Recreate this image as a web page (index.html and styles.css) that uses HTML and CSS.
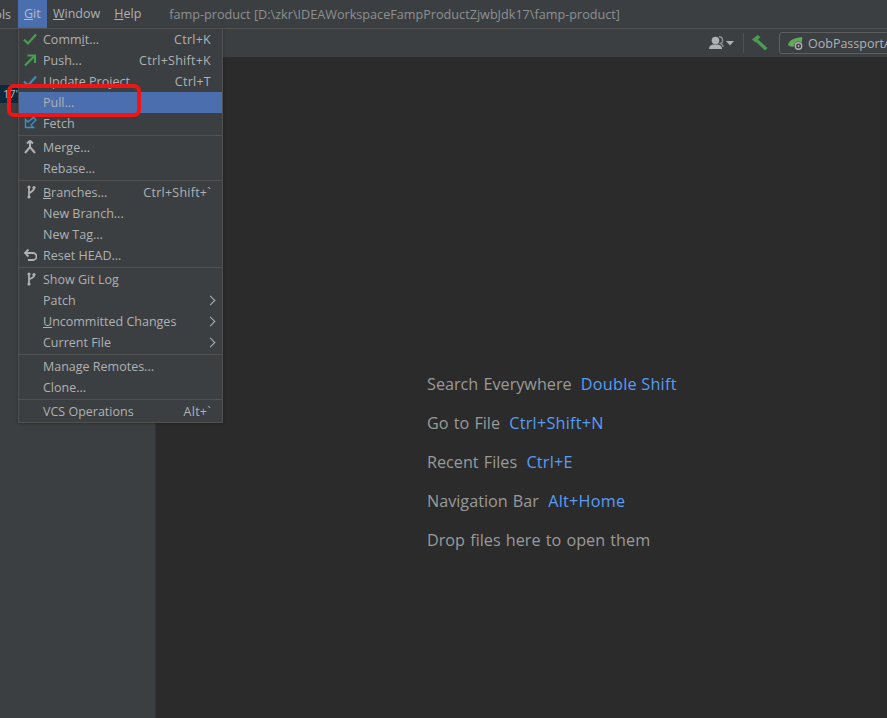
FILE: index.html
```html
<!DOCTYPE html>
<html lang="en">
<head>
    <meta charset="UTF-8">
    <title>famp-product</title>
    <link rel="stylesheet" href="styles.css">
</head>
<body>
    <header class="titlebar">
        <div class="menu-clip"><span>Tools</span></div>
        <a class="menu-item active"><u>G</u>it</a>
        <a class="menu-item"><u>W</u>indow</a>
        <a class="menu-item"><u>H</u>elp</a>
        <span class="title">famp-product [D:\zkr\IDEAWorkspaceFampProductZjwbJdk17\famp-product]</span>
    </header>

    <div class="toolbar">
        <svg class="ico-user" width="26" height="14" viewBox="0 0 26 14">
            <circle cx="6.500" cy="4.500" r="3.800" fill="#afb1b3"/>
            <path d="M0 13c0-3 2-4 4-4.500h5c2 .5 4 1.500 4 4.500z" fill="#afb1b3"/>
            <path d="M10 .8a3.500 3.500 0 0 1 1.500 6.700c1.500.5 2.500 1.500 2.500 3.500" fill="none" stroke="#8a8c8e" stroke-width="1.400"/>
            <path d="M17 5h8l-4 4.500z" fill="#afb1b3"/>
        </svg>
        <div class="tool-sep"></div>
        <svg class="ico-hammer" width="16" height="16" viewBox="0 0 16 16">
            <path d="M0 4.500 5.500 0 8.500 2 3.500 7.500z" fill="#499c54"/>
            <path d="M5 3.500 15.500 13l-2.500 2.500L3 6z" fill="#499c54"/>
        </svg>
        <div class="run-config">
            <svg width="16" height="16" viewBox="0 0 16 16">
                <path d="M0 10C1 5 6 3 14 2c1 5-1 8-5 9-4 1-7 1-9-1z" fill="#62a857"/>
                <circle cx="10.500" cy="11" r="4.500" fill="#3c3f41"/>
                <circle cx="10.500" cy="11" r="3.200" fill="none" stroke="#afb1b3" stroke-width="1.400"/>
                <circle cx="10.500" cy="11" r="1" fill="#afb1b3"/>
            </svg>
            <span>OobPassportApplication</span>
        </div>
    </div>

    <div class="workspace">
        <aside class="sidebar">
            <div class="tree-row"><span>Jdk 17'</span></div>
        </aside>
        <main class="editor">
            <div class="hints">
                <p>Search Everywhere <b>Double Shift</b></p>
                <p>Go to File <b>Ctrl+Shift+N</b></p>
                <p>Recent Files <b>Ctrl+E</b></p>
                <p>Navigation Bar <b>Alt+Home</b></p>
                <p>Drop files here to open them</p>
            </div>
        </main>
    </div>

    <nav class="git-menu">
        <div class="row">
            <svg class="icon" width="14" height="14" viewBox="0 0 14 14"><path d="M1 7.500 5 11.500 13 2.500" fill="none" stroke="#499c54" stroke-width="2.200"/></svg>
            <span class="label">Comm<u>i</u>t...</span><span class="keys">Ctrl+K</span>
        </div>
        <div class="row">
            <svg class="icon" width="14" height="14" viewBox="0 0 14 14"><path d="M2 12.500 11.500 3M4.500 2.500h7.500v7.500" fill="none" stroke="#499c54" stroke-width="2.200"/></svg>
            <span class="label">Push...</span><span class="keys">Ctrl+Shift+K</span>
        </div>
        <div class="row">
            <svg class="icon" width="14" height="14" viewBox="0 0 14 14"><path d="M1 7.500 5 11.500 13 2.500" fill="none" stroke="#3592c4" stroke-width="2.200"/></svg>
            <span class="label">Update Project</span><span class="keys">Ctrl+T</span>
        </div>
        <div class="row selected">
            <span class="label">Pull...</span>
        </div>
        <div class="row">
            <svg class="icon" width="14" height="14" viewBox="0 0 14 14"><path d="M10.500 1.500 13 4 8 9l2.500 2.500H2.500v-8L5 6z" fill="none" stroke="#3592c4" stroke-width="1.400"/></svg>
            <span class="label">Fetch</span>
        </div>
        <div class="sep"></div>
        <div class="row">
            <svg class="icon" width="14" height="14" viewBox="0 0 14 14"><path d="M7 1v6M7 7 2 13M7 7l5 6M4 3.500 7 .8l3 2.700" fill="none" stroke="#afb1b3" stroke-width="2"/></svg>
            <span class="label">Merge...</span>
        </div>
        <div class="row"><span class="label">Rebase...</span></div>
        <div class="sep"></div>
        <div class="row">
            <svg class="icon icon-branch" width="14" height="14" viewBox="0 0 14 14"><path d="M5 2v10M5 9c0-2 5-2 5-6" fill="none" stroke="#afb1b3" stroke-width="1.800"/><circle cx="5" cy="2" r="1.600" fill="#afb1b3"/><circle cx="5" cy="12" r="1.600" fill="#afb1b3"/><circle cx="10" cy="2.500" r="1.600" fill="#afb1b3"/></svg>
            <span class="label"><u>B</u>ranches...</span><span class="keys">Ctrl+Shift+`</span>
        </div>
        <div class="row"><span class="label">New Branch...</span></div>
        <div class="row"><span class="label">New Tag...</span></div>
        <div class="row">
            <svg class="icon" width="14" height="14" viewBox="0 0 14 14"><path d="M2.500 5H10a3 3 0 0 1 0 7H5M5.500 1.500 2 5l3.500 3.500" fill="none" stroke="#afb1b3" stroke-width="1.800"/></svg>
            <span class="label">Reset HEAD...</span>
        </div>
        <div class="sep"></div>
        <div class="row">
            <svg class="icon icon-branch" width="14" height="14" viewBox="0 0 14 14"><path d="M5 2v10M5 8c0-2 5-1 5-5" fill="none" stroke="#afb1b3" stroke-width="1.800"/><circle cx="5" cy="2" r="1.600" fill="#afb1b3"/><circle cx="5" cy="12" r="1.600" fill="#afb1b3"/><circle cx="10" cy="2.500" r="1.600" fill="#afb1b3"/></svg>
            <span class="label">Show Git Log</span>
        </div>
        <div class="row"><span class="label">Patch</span><span class="arrow"></span></div>
        <div class="row"><span class="label"><u>U</u>ncommitted Changes</span><span class="arrow"></span></div>
        <div class="row"><span class="label">Current File</span><span class="arrow"></span></div>
        <div class="sep"></div>
        <div class="row"><span class="label">Manage Remotes...</span></div>
        <div class="row"><span class="label">Clone...</span></div>
        <div class="sep"></div>
        <div class="row"><span class="label">VCS Operations</span><span class="keys">Alt+`</span></div>
    </nav>

    <div class="red-box"></div>
</body>
</html>
```

FILE: styles.css
```css
html, body { margin: 0; padding: 0; height: 100%; overflow: hidden; }
body {
    position: relative;
    display: flex;
    flex-direction: column;
    background-color: #3c3f41;
    color: #afb1b3;
    font-family: "Open Sans", "Noto Sans", Arial, sans-serif;
    font-size: 12.5px;
}

/* title row */
.titlebar {
    display: flex;
    align-items: center;
    height: 28px;
    border-bottom: 1px solid #515151;
    white-space: nowrap;
    flex: none;
}
.menu-clip { width: 18px; overflow: hidden; display: flex; justify-content: flex-end; padding-right: 7px; box-sizing: border-box; }
.menu-item { height: 28px; line-height: 28px; padding: 0 6px; }
.menu-item.active { background-color: #4b6eaf; color: #bbbbbb; width: 29px; box-sizing: border-box; }
.menu-item:nth-child(3) { margin-right: 2px; }
.title { margin-left: 22px; color: #8d8f91; font-size: 12.65px; }

/* toolbar */
.toolbar {
    display: flex;
    align-items: center;
    justify-content: flex-end;
    height: 28px;
    flex: none;
    overflow: hidden;
    padding-left: 600px;
}
.ico-user { flex: none; margin-right: 8px; }
.tool-sep { width: 1px; height: 20px; background-color: #515151; flex: none; margin-right: 8px; }
.ico-hammer { flex: none; margin-right: 11px; }
.run-config {
    display: flex;
    align-items: center;
    gap: 4px;
    flex: none;
    width: 200px;
    height: 20px;
    margin-right: -102px;
    padding-left: 8px;
    border: 1px solid #5e6060;
    border-radius: 3px;
    white-space: nowrap;
    font-size: 12.5px;
}

/* main area */
.workspace { display: flex; flex: 1; min-height: 0; }
.sidebar { width: 155px; flex: none; border-right: 1px solid #323232; background-color: #3c3f41; }
.tree-row {
    display: flex;
    justify-content: flex-end;
    margin-top: 28px;
    height: 18px;
    line-height: 18px;
    width: 18px;
    overflow: hidden;
    white-space: nowrap;
    font-size: 11px;
    background-color: #0d293e;
    color: #bbbbbb;
}
.editor { flex: 1; background-color: #2b2b2b; padding: 0 0 0 271px; display: flex; align-items: flex-start; }
.hints { margin-top: 308px; font-size: 16.2px; word-spacing: 1px; color: #9a9a9a; }
.hints p { margin: 0; height: 39px; line-height: 39px; white-space: nowrap; }
.hints b { font-weight: normal; color: #589df6; margin-left: 4px; letter-spacing: 0.25px; word-spacing: 0; }

/* git dropdown */
.git-menu {
    position: absolute;
    left: 18px;
    top: 28px;
    width: 203px;
    border: 1px solid #515151;
    background-color: #3c3f41;
    box-shadow: 0 1px 3px rgba(0,0,0,0.25);
}
.row {
    position: relative;
    display: flex;
    align-items: center;
    height: 21px;
    padding: 0 11px 0 24px;
    white-space: nowrap;
}
.row .icon { position: absolute; left: 4px; top: 3px; }
.row .icon-branch { left: 5px; }
.row .label { flex: 1; }
.row .keys { letter-spacing: 0.25px; }
.row.selected { background-color: #4b6eaf; }
.sep { height: 1px; margin: 1px 0; background-color: #515151; }
.arrow {
    width: 6px;
    height: 6px;
    margin-right: -3px;
    border-top: 1px solid #afb1b3;
    border-right: 1px solid #afb1b3;
    transform: rotate(45deg);
}

/* annotation */
.red-box {
    position: absolute;
    left: 7px;
    top: 84px;
    width: 126px;
    height: 25px;
    border: 4px solid #f01414;
    border-radius: 7px;
}
```
